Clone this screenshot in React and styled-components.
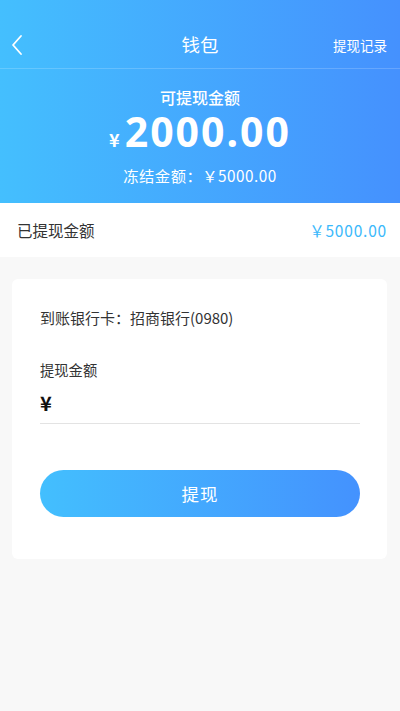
import styled, { createGlobalStyle } from "styled-components";

const GlobalStyle = createGlobalStyle`
  html, body {
    margin: 0;
    padding: 0;
    background: #f8f8f8;
    font-family: "Noto Sans CJK SC", "Noto Sans", sans-serif;
  }
  * { box-sizing: border-box; }
`;

const Page = styled.div`
  width: 400px;
  min-height: 711px;
  background: #f8f8f8;
`;

const Header = styled.div`
  background: linear-gradient(90deg, #44bffe 0%, #4591fe 100%);
  color: #ffffff;
  height: 203px;
`;

const NavBar = styled.div`
  height: 69px;
  display: flex;
  align-items: center;
  justify-content: space-between;
  padding: 22px 13px 0 10px;
  border-bottom: 1px solid rgba(255, 255, 255, 0.18);
  position: relative;
`;

const BackButton = styled.div`
  width: 20px;
  height: 24px;
  display: flex;
  align-items: center;
`;

const NavTitle = styled.div`
  position: absolute;
  left: 0;
  right: 0;
  bottom: 11px;
  text-align: center;
  font-size: 18.5px;
  pointer-events: none;
`;

const NavLink = styled.div`
  font-size: 13.5px;
`;

const Balance = styled.div`
  display: flex;
  flex-direction: column;
  align-items: center;
  padding-top: 17px;
`;

const BalanceLabel = styled.div`
  font-size: 16px;
  font-weight: 500;
  line-height: 22px;
`;

const Amount = styled.div`
  margin-top: 2px;
  height: 42px;
  display: flex;
  align-items: baseline;
  font-weight: 700;
  line-height: 42px;
  .sign {
    font-size: 18px;
    margin-right: 5px;
  }
  .num {
    font-size: 41px;
    letter-spacing: 2px;
    font-family: "Noto Sans", sans-serif;
  }
`;

const Frozen = styled.div`
  margin-top: 12px;
  font-size: 15.3px;
  line-height: 22px;
  letter-spacing: 0.5px;
`;

const WithdrawnRow = styled.div`
  height: 54px;
  background: #ffffff;
  display: flex;
  align-items: center;
  justify-content: space-between;
  padding: 0 13px 0 17px;
  font-size: 15.5px;
  color: #333333;
  .value {
    color: #3cb9fb;
    letter-spacing: 0.8px;
  }
`;

const Card = styled.div`
  margin: 22px 13px 0 12px;
  background: #ffffff;
  border-radius: 6px;
  padding: 27px 27px 42px 28px;
`;

const BankLine = styled.div`
  font-size: 15px;
  color: #333333;
  line-height: 24px;
`;

const FieldLabel = styled.div`
  margin-top: 28px;
  font-size: 14.3px;
  color: #333333;
  line-height: 24px;
`;

const InputRow = styled.div`
  height: 42px;
  display: flex;
  align-items: center;
  border-bottom: 1px solid #e3e3e3;
  .sign {
    font-size: 20px;
    font-weight: 700;
    color: #111111;
  }
`;

const SubmitButton = styled.button`
  margin-top: 46px;
  width: 100%;
  height: 47px;
  border: none;
  border-radius: 24px;
  background: linear-gradient(90deg, #43bffe 0%, #4492fe 100%);
  color: #ffffff;
  font-size: 17.5px;
  font-family: "Noto Sans CJK SC", sans-serif;
  letter-spacing: 1px;
`;

const App = () => {
  return (
    <Page>
      <GlobalStyle />
      <Header>
        <NavBar>
          <BackButton>
            <svg width="14" height="22" viewBox="0 0 14 22">
              <path d="M11 2 L3 11 L11 20" fill="none" stroke="#fff" strokeWidth="1.8" strokeLinecap="round" strokeLinejoin="round" />
            </svg>
          </BackButton>
          <NavTitle>钱包</NavTitle>
          <NavLink>提现记录</NavLink>
        </NavBar>
        <Balance>
          <BalanceLabel>可提现金额</BalanceLabel>
          <Amount>
            <span className="sign">¥</span>
            <span className="num">2000.00</span>
          </Amount>
          <Frozen>冻结金额：￥5000.00</Frozen>
        </Balance>
      </Header>
      <WithdrawnRow>
        <span>已提现金额</span>
        <span className="value">￥5000.00</span>
      </WithdrawnRow>
      <Card>
        <BankLine>到账银行卡：招商银行(0980)</BankLine>
        <FieldLabel>提现金额</FieldLabel>
        <InputRow>
          <span className="sign">¥</span>
        </InputRow>
        <SubmitButton>提现</SubmitButton>
      </Card>
    </Page>
  );
};

export default App;
